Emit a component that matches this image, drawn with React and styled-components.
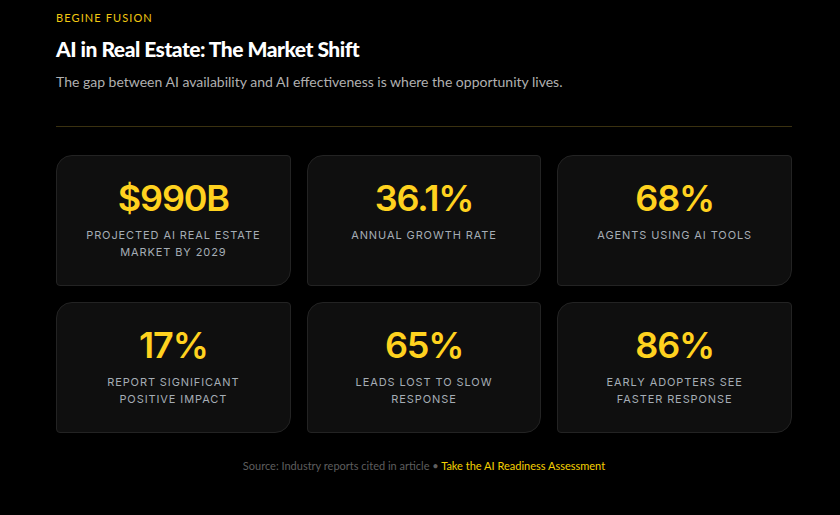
import styled, { createGlobalStyle } from "styled-components";

const GlobalStyle = createGlobalStyle`
  html, body {
    margin: 0;
    padding: 0;
    background: #000;
  }
  body {
    font-family: "Lato", "Liberation Sans", sans-serif;
    -webkit-font-smoothing: antialiased;
  }
`;

const stats = [
  { value: "$990B", label: "Projected AI real estate market by 2029" },
  { value: "36.1%", label: "Annual growth rate" },
  { value: "68%", label: "Agents using AI tools" },
  { value: "17%", label: "Report significant positive impact" },
  { value: "65%", label: "Leads lost to slow response" },
  { value: "86%", label: "Early adopters see faster response" },
];

const App = () => {
  return (
    <>
      <GlobalStyle />
      <Page>
        <Eyebrow>Begine Fusion</Eyebrow>
        <Title>AI in Real Estate: The Market Shift</Title>
        <Subtitle>
          The gap between AI availability and AI effectiveness is where the
          opportunity lives.
        </Subtitle>
        <Divider />
        <StatGrid>
          {stats.map((s) => (
            <StatCard key={s.value}>
              <StatValue>{s.value}</StatValue>
              <StatLabel>{s.label}</StatLabel>
            </StatCard>
          ))}
        </StatGrid>
        <Footer>
          Source: Industry reports cited in article •{" "}
          <FooterLink href="#">Take the AI Readiness Assessment</FooterLink>
        </Footer>
      </Page>
    </>
  );
};

// Styled components
const Page = styled.div`
  width: 840px;
  height: 515px;
  box-sizing: border-box;
  padding: 11px 48px 0 56px;
  background: #000;
  display: flex;
  flex-direction: column;
`;

const Eyebrow = styled.div`
  font-size: 11px;
  line-height: 14px;
  letter-spacing: 1.1px;
  text-transform: uppercase;
  color: #f2c811;
`;

const Title = styled.h1`
  margin: 11px 0 0;
  font-size: 21px;
  line-height: 26px;
  font-weight: 900;
  letter-spacing: -0.5px;
  color: #fff;
`;

const Subtitle = styled.p`
  margin: 11px 0 0;
  font-size: 14px;
  line-height: 18px;
  color: #b0b0b0;
`;

const Divider = styled.hr`
  margin: 35px 0 0;
  border: none;
  height: 1px;
  background: #3a3110;
`;

const StatGrid = styled.div`
  margin-top: 28px;
  display: grid;
  grid-template-columns: repeat(3, 1fr);
  grid-auto-rows: 131px;
  gap: 16px;
`;

const StatCard = styled.div`
  box-sizing: border-box;
  background: #0f0f0f;
  border: 1px solid #232323;
  border-radius: 16px 4px 16px 4px;
  display: flex;
  flex-direction: column;
  align-items: center;
  padding: 20px 20px 0;
  text-align: center;
`;

const StatValue = styled.div`
  font-family: "Inter", "Liberation Sans", sans-serif;
  font-size: 36px;
  line-height: 44px;
  font-weight: 600;
  letter-spacing: -1.2px;
  color: #ffd21f;
`;

const StatLabel = styled.div`
  margin-top: 7px;
  max-width: 182px;
  font-family: "Inter", "Liberation Sans", sans-serif;
  font-size: 11px;
  line-height: 17px;
  letter-spacing: 0.9px;
  text-transform: uppercase;
  color: #a5adb5;
`;

const Footer = styled.div`
  margin-top: 26px;
  text-align: center;
  font-size: 11px;
  line-height: 14px;
  color: #5e5e5e;
`;

const FooterLink = styled.a`
  color: #f5d000;
  text-decoration: none;
`;

export default App;
